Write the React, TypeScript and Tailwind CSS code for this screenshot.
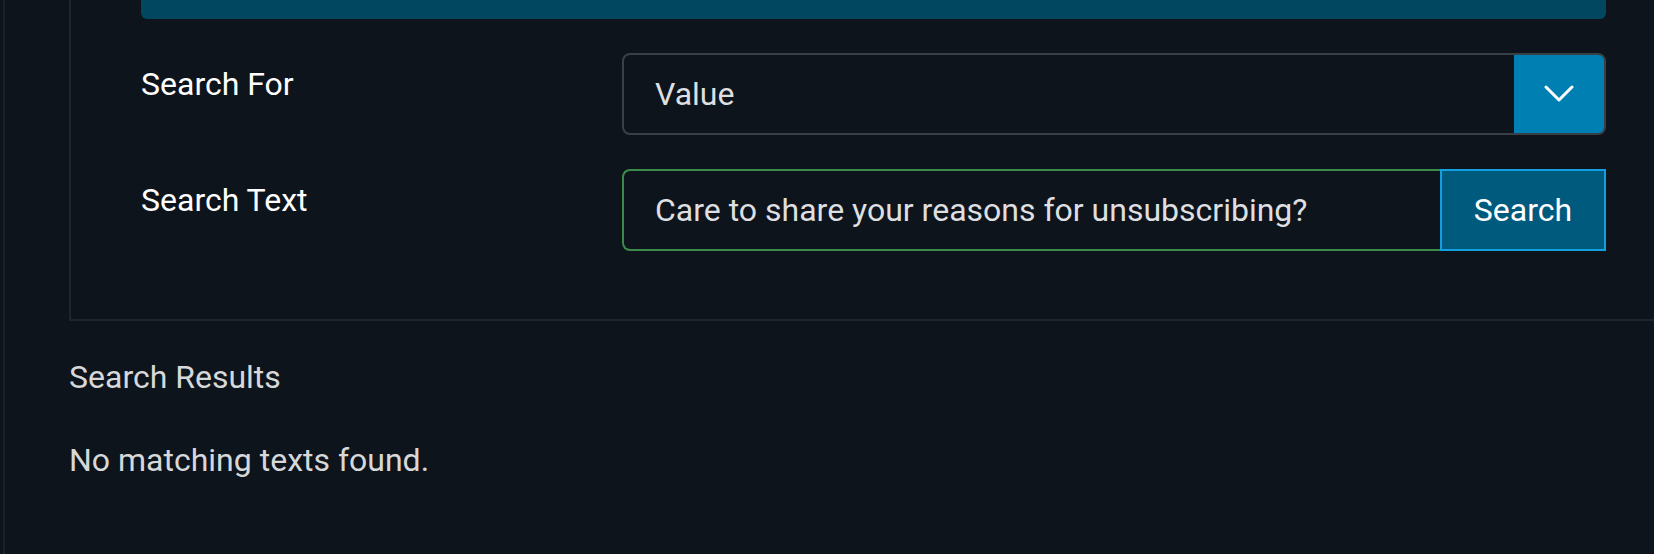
import React from 'react';

const font = { fontFamily: 'Roboto, "Liberation Sans", sans-serif' };

export default function App() {
  return (
    <div style={font} className="w-[1654px] h-[554px] overflow-hidden bg-[#0e141b] flex">
      <div className="ml-[3px] w-[2px] h-full bg-[#1b222a]" />
      <div className="flex-1 pl-[64px] flex flex-col">
        <div className="border-l-2 border-b-2 border-[#1e252d] pl-[70px] pr-[48px] pb-[68px]">
          <div className="h-[19px] rounded-b-[6px] bg-[#00475f]" />

          <div className="mt-[34px] grid grid-cols-[481px_1fr] gap-y-[34px]">
            <label className="mt-[7px] text-[32px] leading-[48px] text-white">Search For</label>
            <div className="h-[82px] flex rounded-[8px] border-2 border-[#3a4047] overflow-hidden">
              <div className="flex-1 flex items-center pl-[31px] text-[32px] text-[#dedfe0]">Value</div>
              <button className="w-[92px] -my-[2px] -mr-[2px] rounded-r-[8px] bg-[#0080b2] border-2 border-l-0 border-[#2b90bd] flex items-center justify-center">
                <svg width="30" height="18" viewBox="0 0 30 18" fill="none">
                  <path d="M2 2 L15 15 L28 2" stroke="#ffffff" strokeWidth="3" strokeLinecap="round" strokeLinejoin="round" />
                </svg>
              </button>
            </div>

            <label className="mt-[7px] text-[32px] leading-[48px] text-white">Search Text</label>
            <div className="h-[82px] flex">
              <div className="flex-1 flex items-center pl-[31px] rounded-l-[8px] border-2 border-r-0 border-[#3b8a49] text-[32px] text-[#dedfe0]">
                Care to share your reasons for unsubscribing?
              </div>
              <button className="w-[166px] bg-[#005a7e] border-2 border-[#12a0e0] text-[32px] text-white">Search</button>
            </div>
          </div>
        </div>

        <div className="mt-[35px] text-[32px] leading-[42px] text-[#d6d8da]">Search Results</div>
        <div className="mt-[41px] text-[32px] leading-[42px] text-[#d6d8da]">No matching texts found.</div>
      </div>
    </div>
  );
}
